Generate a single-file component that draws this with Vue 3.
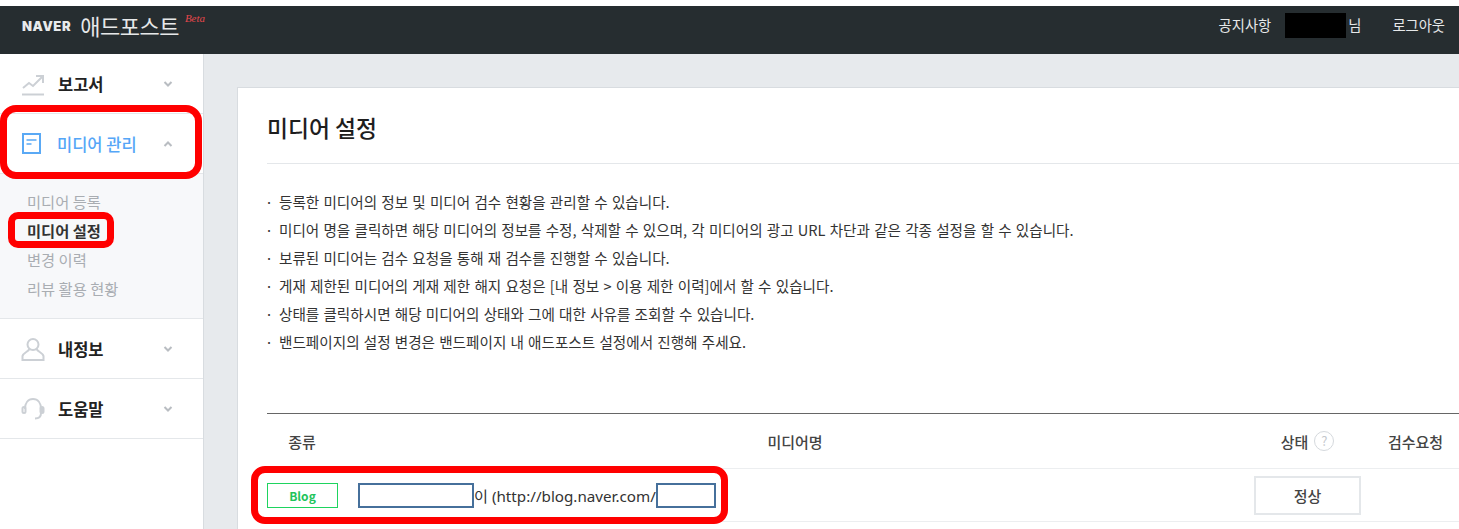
<script setup>
const notes = [
  '등록한 미디어의 정보 및 미디어 검수 현황을 관리할 수 있습니다.',
  '미디어 명을 클릭하면 해당 미디어의 정보를 수정, 삭제할 수 있으며, 각 미디어의 광고 URL 차단과 같은 각종 설정을 할 수 있습니다.',
  '보류된 미디어는 검수 요청을 통해 재 검수를 진행할 수 있습니다.',
  '게재 제한된 미디어의 게재 제한 해지 요청은 [내 정보 > 이용 제한 이력]에서 할 수 있습니다.',
  '상태를 클릭하시면 해당 미디어의 상태와 그에 대한 사유를 조회할 수 있습니다.',
  '밴드페이지의 설정 변경은 밴드페이지 내 애드포스트 설정에서 진행해 주세요.'
]
const subMenu = [
  { label: '미디어 등록', active: false },
  { label: '미디어 설정', active: true },
  { label: '변경 이력', active: false },
  { label: '리뷰 활용 현황', active: false }
]
</script>

<template>
  <div class="page">
    <header class="topbar">
      <div class="logo">
        <span class="naver">NAVER</span>
        <span class="adpost">애드포스트</span>
        <span class="beta">Beta</span>
      </div>
      <nav class="topnav">
        <a class="notice">공지사항</a>
        <span class="user"><span class="redact"></span>님</span>
        <a>로그아웃</a>
      </nav>
    </header>

    <div class="body">
      <aside class="sidebar">
        <div class="menu">
          <svg class="icon" width="24" height="24" viewBox="0 0 24 24" fill="none" stroke="#ccd0d5" stroke-width="2">
            <path d="M1 22.5h22" />
            <path d="M2 16l6-5 4 3 9-9" />
            <path d="M15 4h7v7" fill="none" />
          </svg>
          <span class="menu-label">보고서</span>
          <svg class="chev" width="10" height="8" viewBox="0 0 10 8" fill="none" stroke="#b9bdc2" stroke-width="2"><path d="M1.5 2l3.5 3.5L8.500 2" /></svg>
        </div>
        <div class="menu open">
          <svg class="icon" width="24" height="24" viewBox="0 0 24 24" fill="none" stroke="#5aa9f5" stroke-width="2">
            <rect x="2" y="2" width="17" height="19" />
            <path d="M5.500 8h10M5.500 12h5" stroke-width="1.500" />
          </svg>
          <span class="menu-label">미디어 관리</span>
          <svg class="chev" width="10" height="8" viewBox="0 0 10 8" fill="none" stroke="#b9bdc2" stroke-width="2"><path d="M1.5 6L5 2.500 8.500 6" /></svg>
        </div>
        <ul class="submenu">
          <li v-for="item in subMenu" :key="item.label" :class="{ active: item.active }">{{ item.label }}</li>
        </ul>
        <div class="menu">
          <svg class="icon" width="24" height="24" viewBox="0 0 24 24" fill="none" stroke="#ccd0d5" stroke-width="2">
            <circle cx="12" cy="7.500" r="5.500" />
            <path d="M8.500 12C7 15 2 16 1.500 19v4h21v-4c-.5-3-5.500-4-7-7" />
          </svg>
          <span class="menu-label">내정보</span>
          <svg class="chev" width="10" height="8" viewBox="0 0 10 8" fill="none" stroke="#b9bdc2" stroke-width="2"><path d="M1.5 2l3.5 3.5L8.500 2" /></svg>
        </div>
        <div class="menu">
          <svg class="icon" width="24" height="24" viewBox="0 0 24 24" fill="none" stroke="#ccd0d5" stroke-width="2">
            <path d="M4 12C4 6 7 2 12 2s8 4 8 10" />
            <rect x="1.500" y="10" width="3" height="6" rx="1.500" />
            <rect x="19.500" y="10" width="3" height="6" rx="1.500" fill="#ccd0d5" />
            <path d="M20 16c0 3-2 5.500-6 5.500" />
          </svg>
          <span class="menu-label">도움말</span>
          <svg class="chev" width="10" height="8" viewBox="0 0 10 8" fill="none" stroke="#b9bdc2" stroke-width="2"><path d="M1.5 2l3.5 3.5L8.500 2" /></svg>
        </div>
        <div class="mark mark-menu"></div>
        <div class="mark mark-sub"></div>
      </aside>

      <main class="content">
        <section class="card">
          <h1 class="title">미디어 설정</h1>
          <ul class="notes">
            <li v-for="note in notes" :key="note">{{ note }}</li>
          </ul>
          <div class="table">
            <div class="row head">
              <div class="head-type">종류</div>
              <div class="head-name">미디어명</div>
              <div class="status-head">상태 <span class="help">?</span></div>
              <div>검수요청</div>
            </div>
            <div class="row item">
              <div class="type-cell"><span class="tag">Blog</span></div>
              <div class="name-cell">
                <span class="blank blank-name"></span><span class="url">이 (http://blog.naver.com/</span><span class="blank blank-id"></span>
              </div>
              <div><button class="state">정상</button></div>
              <div></div>
            </div>
            <div class="mark mark-row"></div>
          </div>
        </section>
      </main>
    </div>
  </div>
</template>

<style>
html, body {
  margin: 0;
  overflow: hidden;
}
</style>

<style scoped>
.page {
  width: 1459px;
  height: 529px;
  overflow: hidden;
  padding-top: 6px;
  box-sizing: border-box;
  background: #fff;
  font-family: "Noto Sans CJK KR", "Liberation Sans", sans-serif;
  color: #222;
}

.topbar {
  height: 48px;
  background: #262d30;
  display: flex;
  justify-content: space-between;
  color: #e6e8e9;
}
.logo {
  display: flex;
  align-items: flex-start;
  padding-left: 22px;
}
.naver {
  font-family: "Inter", "Liberation Sans", sans-serif;
  font-weight: 900;
  font-size: 13px;
  line-height: 14px;
  margin-top: 13px;
  letter-spacing: 0.6px;
  color: #e8eaeb;
}
.adpost {
  font-size: 22px;
  font-weight: 400;
  line-height: 26px;
  margin-left: 9px;
  margin-top: 6px;
  letter-spacing: -0.5px;
}
.beta {
  font-family: "Liberation Serif", serif;
  font-style: italic;
  font-size: 11px;
  line-height: 10px;
  color: #e5474b;
  margin-left: 6px;
  margin-top: 7px;
}
.topnav {
  display: flex;
  align-items: flex-start;
  font-size: 14.300px;
  line-height: 18px;
  padding-right: 14px;
  padding-top: 10px;
}
.notice {
  margin-right: 14px;
}
.user {
  display: flex;
  margin-right: 31px;
}
.redact {
  width: 61px;
  height: 25px;
  margin-top: -3px;
  margin-right: 2px;
  background: #000;
}

.body {
  display: flex;
  height: 475px;
  background: #e7eaed;
}
.sidebar {
  position: relative;
  width: 203px;
  flex-shrink: 0;
  background: #fff;
  border-right: 1px solid #d8dce0;
}
.menu {
  height: 59px;
  display: flex;
  align-items: center;
  padding-left: 21px;
  border-bottom: 1px solid #e4e7ea;
}
.menu .icon {
  flex-shrink: 0;
}
.menu-label {
  width: 105px;
  margin-left: 13px;
  font-size: 16.500px;
  font-weight: 700;
  color: #222;
}
.open .menu-label {
  color: #55a6f7;
  font-weight: 500;
  margin-left: 12px;
  width: 106px;
}
.chev {
  flex-shrink: 0;
}
.submenu {
  list-style: none;
  margin: 0;
  padding: 13px 0 16px 27px;
  height: 115px;
  background: #f7f8fa;
  border-bottom: 1px solid #e4e7ea;
  font-size: 15.300px;
  line-height: 29px;
  color: #a9adb2;
}
.submenu .active {
  color: #333;
  font-weight: 700;
}

.mark {
  position: absolute;
  border: 7px solid #f00;
  box-sizing: border-box;
  pointer-events: none;
}
.mark-menu {
  left: 0;
  top: 51px;
  width: 202px;
  height: 74px;
  border-radius: 16px;
}
.mark-sub {
  left: 8px;
  top: 158px;
  width: 106px;
  height: 36px;
  border-radius: 10px;
}

.content {
  flex: 1;
  padding: 33px 0 0 33px;
  overflow: hidden;
}
.card {
  width: 1300px;
  height: 500px;
  box-sizing: border-box;
  background: #fff;
  border: 1px solid #d8dce0;
  padding: 0 0 0 29px;
}
.title {
  margin: 0;
  height: 75px;
  line-height: 80px;
  font-size: 22.800px;
  font-weight: 500;
  color: #1e1e1e;
  border-bottom: 1px solid #e4e7ea;
}
.notes {
  list-style: none;
  margin: 0;
  padding: 24px 0 0;
  height: 249px;
  box-sizing: border-box;
  font-size: 14.600px;
  word-spacing: 0.9px;
  line-height: 28px;
  color: #333;
}
.notes li {
  padding-left: 12px;
  position: relative;
}
.notes li::before {
  content: "·";
  position: absolute;
  left: -2px;
}

.table {
  position: relative;
  width: 1203px;
  border-top: 1px solid #666;
}
.row {
  display: grid;
  grid-template-columns: 91px 896px 107px 109px;
  align-items: center;
  border-bottom: 1px solid #eceef0;
}
.head {
  height: 54px;
  font-size: 15px;
  font-weight: 500;
  color: #444;
  text-align: center;
}
.head-type {
  width: 70px;
}
.head-name {
  padding-right: 22px;
}
.status-head {
  display: flex;
  justify-content: center;
  align-items: center;
  gap: 6px;
}
.help {
  width: 20px;
  height: 20px;
  box-sizing: border-box;
  border: 1.500px solid #d5d9dd;
  border-radius: 50%;
  font-size: 13px;
  line-height: 17px;
  font-weight: 400;
  color: #c4c8cc;
}
.item {
  height: 52px;
}
.tag {
  display: block;
  width: 71px;
  height: 25px;
  box-sizing: border-box;
  border: 1px solid #1ed45f;
  font-size: 12px;
  font-weight: 700;
  line-height: 23px;
  text-align: center;
  color: #1fc45c;
}
.name-cell {
  display: flex;
  align-items: center;
}
.blank {
  height: 25px;
  box-sizing: border-box;
  border: 2px solid #46709b;
  background: #fff;
}
.blank-name {
  width: 116px;
}
.blank-id {
  width: 60px;
}
.url {
  font-family: "Noto Sans", "Noto Sans CJK KR", sans-serif;
  font-size: 15.200px;
  color: #333;
  width: 182px;
  white-space: nowrap;
}
.state {
  display: block;
  width: 107px;
  height: 39px;
  padding: 0;
  background: #fff;
  border: 2px solid #e4e7ea;
  font-family: inherit;
  font-size: 15px;
  font-weight: 500;
  color: #444;
}
.mark-row {
  left: -16px;
  top: 52px;
  width: 477px;
  height: 58px;
  border-radius: 14px;
}
</style>
